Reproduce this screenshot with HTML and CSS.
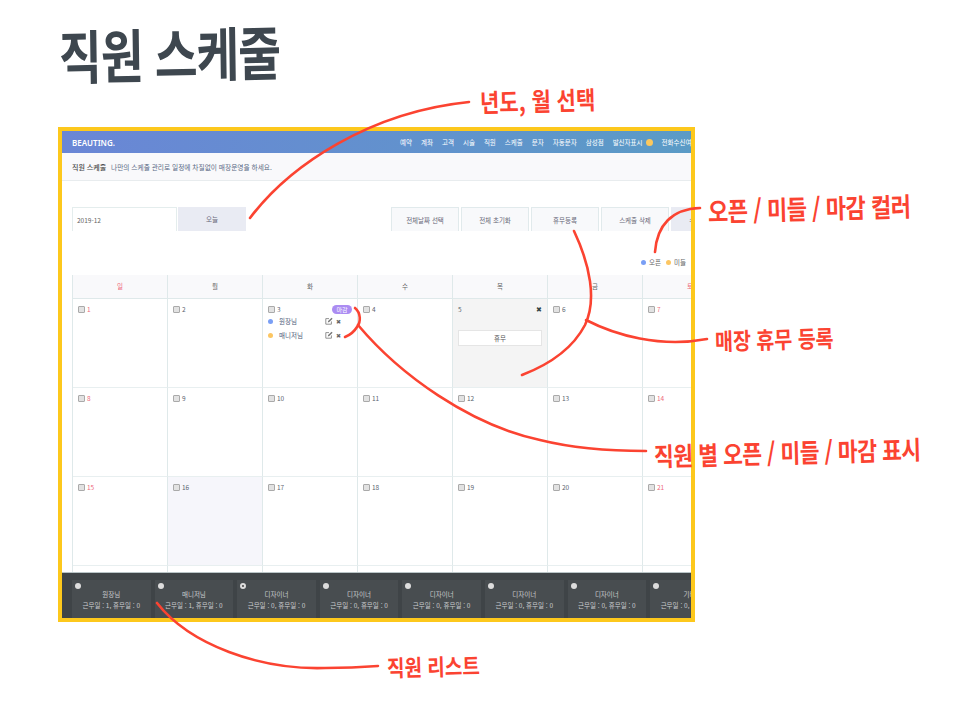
FILE: index.html
```html
<!DOCTYPE html>
<html lang="ko">
<head>
    <meta charset="UTF-8">
    <meta name="viewport" content="width=device-width, initial-scale=1.0">
    <title>직원 스케줄</title>
    <link rel="stylesheet" href="styles.css">
</head>
<body>
    <div class="page">
        <h1 class="page-title"><span>직원 스케줄</span></h1>

        <div class="frame">
            <header class="topbar">
                <div class="logo">BEAUTING.</div>
                <nav class="nav">
                    <span>예약</span><span>계좌</span><span>고객</span><span>시술</span><span>직원</span>
                    <span>스케줄</span><span>문자</span><span>자동문자</span><span>삼성점</span>
                    <span class="nav-caller">발신자표시 <i class="nav-dot"></i></span>
                    <span>전화수신여부</span>
                </nav>
            </header>
            <div class="subbar"><b>직원 스케줄</b> 나만의 스케줄 관리로 일정에 차질없이 매장운영을 하세요.</div>

            <main class="content">
                <div class="toolbar">
                    <div class="date-box">2019-12</div>
                    <div class="tool-btn today">오늘</div>
                    <div class="tool-group">
                        <div class="tool-btn">전체날짜 선택</div>
                        <div class="tool-btn">전체 초기화</div>
                        <div class="tool-btn">휴무등록</div>
                        <div class="tool-btn">스케줄 삭제</div>
                        <div class="tool-btn save">스케줄 저장</div>
                    </div>
                </div>

                <div class="legend">
                    <span class="legend-item"><i class="dot blue"></i>오픈</span>
                    <span class="legend-item"><i class="dot yellow"></i>미들</span>
                    <span class="legend-item"><i class="dot purple"></i>마감</span>
                </div>

                <div class="calendar">
                    <div class="head red">일</div>
                    <div class="head">월</div>
                    <div class="head">화</div>
                    <div class="head">수</div>
                    <div class="head">목</div>
                    <div class="head">금</div>
                    <div class="head red">토</div>

                    <div class="day"><div class="num red"><i class="check"></i>1</div></div>
                    <div class="day"><div class="num"><i class="check"></i>2</div></div>
                    <div class="day">
                        <div class="num"><i class="check"></i>3<span class="badge">마감</span></div>
                        <div class="staff">
                            <i class="dot blue"></i><span class="staff-name">원장님</span>
                            <svg class="edit" viewBox="0 0 10 10"><path d="M8 5.5V9H1V2h4" fill="none" stroke="#777" stroke-width="1"/><path d="M3.5 6.8l.4-1.8L8.2.8l1.3 1.3-4.2 4.3z" fill="#777"/></svg>
                            <span class="remove">✖</span>
                        </div>
                        <div class="staff">
                            <i class="dot yellow"></i><span class="staff-name">매니저님</span>
                            <svg class="edit" viewBox="0 0 10 10"><path d="M8 5.5V9H1V2h4" fill="none" stroke="#777" stroke-width="1"/><path d="M3.5 6.8l.4-1.8L8.2.8l1.3 1.3-4.2 4.3z" fill="#777"/></svg>
                            <span class="remove">✖</span>
                        </div>
                    </div>
                    <div class="day"><div class="num"><i class="check"></i>4</div></div>
                    <div class="day closed">
                        <div class="num closed-num">5<span class="closed-x">✖</span></div>
                        <div class="closed-tag">휴무</div>
                    </div>
                    <div class="day"><div class="num"><i class="check"></i>6</div></div>
                    <div class="day"><div class="num red"><i class="check"></i>7</div></div>

                    <div class="day"><div class="num red"><i class="check"></i>8</div></div>
                    <div class="day"><div class="num"><i class="check"></i>9</div></div>
                    <div class="day"><div class="num"><i class="check"></i>10</div></div>
                    <div class="day"><div class="num"><i class="check"></i>11</div></div>
                    <div class="day"><div class="num"><i class="check"></i>12</div></div>
                    <div class="day"><div class="num"><i class="check"></i>13</div></div>
                    <div class="day"><div class="num red"><i class="check"></i>14</div></div>

                    <div class="day"><div class="num red"><i class="check"></i>15</div></div>
                    <div class="day today-cell"><div class="num"><i class="check"></i>16</div></div>
                    <div class="day"><div class="num"><i class="check"></i>17</div></div>
                    <div class="day"><div class="num"><i class="check"></i>18</div></div>
                    <div class="day"><div class="num"><i class="check"></i>19</div></div>
                    <div class="day"><div class="num"><i class="check"></i>20</div></div>
                    <div class="day"><div class="num red"><i class="check"></i>21</div></div>

                    <div class="day"></div><div class="day"></div><div class="day"></div><div class="day"></div>
                    <div class="day"></div><div class="day"></div><div class="day"></div>
                </div>
            </main>

            <footer class="staff-bar">
                <div class="card"><i class="radio"></i><div>원장님</div><div>근무일 : 1, 휴무일 : 0</div></div>
                <div class="card"><i class="radio"></i><div>매니저님</div><div>근무일 : 1, 휴무일 : 0</div></div>
                <div class="card"><i class="radio on"></i><div>디자이너</div><div>근무일 : 0, 휴무일 : 0</div></div>
                <div class="card"><i class="radio"></i><div>디자이너</div><div>근무일 : 0, 휴무일 : 0</div></div>
                <div class="card"><i class="radio"></i><div>디자이너</div><div>근무일 : 0, 휴무일 : 0</div></div>
                <div class="card"><i class="radio"></i><div>디자이너</div><div>근무일 : 0, 휴무일 : 0</div></div>
                <div class="card"><i class="radio"></i><div>디자이너</div><div>근무일 : 0, 휴무일 : 0</div></div>
                <div class="card"><i class="radio"></i><div>기타</div><div>근무일 : 0, 휴무일 : 0</div></div>
            </footer>
        </div>

        <!-- red notes drawn over the screenshot -->
        <svg class="arrows" viewBox="0 0 960 714">
            <path d="M250 218C290 165 370 112 469 102"/>
            <path d="M655 252C657 225 672 209 700 208"/>
            <path d="M574 231C590 265 597 300 585 325C572 350 548 365 522 375"/>
            <path d="M586 320C615 335 660 348 707 339"/>
            <path d="M355 308C361 313 361 322 357 327C354 332 350 335 345 337"/>
            <path d="M358 325C400 375 470 425 540 440C580 450 620 451 646 451"/>
            <path d="M157 603C190 645 260 670 325 668C345 668 365 667 378 666"/>
        </svg>
        <div class="note note-date">년도, 월 선택</div>
        <div class="note note-color">오픈 / 미들 / 마감 컬러</div>
        <div class="note note-closed">매장 휴무 등록</div>
        <div class="note note-shift">직원 별 오픈 / 미들 / 마감 표시</div>
        <div class="note note-list">직원 리스트</div>
    </div>
</body>
</html>
```

FILE: styles.css
```css
* {
    box-sizing: border-box;
}

body {
    margin: 0;
    background-color: #fff;
    font-family: "Noto Sans CJK KR", "Noto Sans", sans-serif;
    color: #666;
}

.page {
    position: relative;
    width: 960px;
    height: 714px;
    overflow: hidden;
}

.page-title {
    height: 127px;
    margin: 0;
    padding: 14px 0 0 59px;
    font-size: 46.5px;
    line-height: 76px;
    font-weight: 700;
    color: #3e474f;
    letter-spacing: -1px;
}

.page-title span {
    display: inline-block;
    transform: scaleY(1.25) rotate(-1deg);
}

.frame {
    display: flex;
    flex-direction: column;
    width: 637px;
    height: 495px;
    margin-left: 58px;
    border: 4px solid #fdc81c;
    overflow: hidden;
    font-size: 6.5px;
}

.topbar {
    flex: none;
    display: flex;
    align-items: center;
    height: 22px;
    padding-left: 10px;
    background: linear-gradient(90deg, #6a86d6, #5b9bc6);
    color: #fff;
    white-space: nowrap;
}

.logo {
    flex: none;
    width: 328px;
    font-family: "Noto Sans", sans-serif;
    font-size: 8px;
    font-weight: 600;
}

.nav {
    flex: none;
    display: flex;
    gap: 9px;
    font-size: 6.5px;
}

.nav-caller {
    display: flex;
    align-items: center;
    gap: 3px;
}

.nav-dot {
    width: 7px;
    height: 7px;
    border-radius: 50%;
    background-color: #fbc85e;
}

.subbar {
    flex: none;
    height: 28px;
    padding-left: 10px;
    line-height: 28px;
    background-color: #f9f9fb;
    border-bottom: 1px solid #e8ecee;
    color: #5a6a85;
    font-size: 6.7px;
    white-space: nowrap;
}

.subbar b {
    margin-right: 3px;
    color: #444;
    font-size: 7px;
    font-weight: 500;
}

.content {
    flex: 1;
    min-height: 0;
    padding: 26px 0 0 10px;
    overflow: hidden;
}

.toolbar {
    display: flex;
    width: 700px;
    height: 24px;
}

.date-box {
    width: 105px;
    padding-left: 4px;
    line-height: 24px;
    border: 1px solid #e4eded;
    border-bottom: 0;
    color: #666;
    font-size: 6.5px;
}

.tool-btn {
    width: 68px;
    height: 24px;
    line-height: 24px;
    text-align: center;
    background-color: #f8f9fb;
    border: 1px solid #e1eaec;
    border-bottom: 0;
    color: #667;
}

.today {
    margin-left: 1px;
    background-color: #e9ebf3;
    border: 0;
}

.tool-group {
    display: flex;
    gap: 2px;
    margin-left: 145px;
}

.save {
    background-color: #e9ebf3;
    border: 0;
}

.legend {
    display: flex;
    gap: 5px;
    width: 700px;
    height: 44px;
    padding: 25px 0 0 569px;
    white-space: nowrap;
}

.legend-item {
    display: flex;
    align-items: center;
    gap: 3px;
    height: 12px;
}

.dot {
    display: block;
    flex: none;
    width: 5px;
    height: 5px;
    border-radius: 50%;
}

.blue {
    background-color: #7a9ff5;
}

.yellow {
    background-color: #fcc662;
}

.purple {
    background-color: #b59af0;
}

.calendar {
    display: grid;
    grid-template-columns: repeat(7, 95px);
    grid-template-rows: 24px;
    grid-auto-rows: 89px;
    width: 665px;
    border-left: 1px solid #dfe9ea;
}

.head {
    line-height: 23px;
    text-align: center;
    background-color: #f9f9fb;
    border-right: 1px solid #dfe9ea;
    border-bottom: 1px solid #dfe9ea;
    color: #666;
}

.red {
    color: #ee6a7c;
}

.day {
    padding: 5px 5px 0;
    border-right: 1px solid #dfe9ea;
    border-bottom: 1px solid #e8eff0;
}

.num {
    display: flex;
    align-items: center;
    gap: 2px;
    height: 10px;
    font-size: 6.5px;
}

.num:not(.red) {
    color: #5b6570;
}

.check {
    flex: none;
    width: 7px;
    height: 7px;
    background-color: #e2e2e2;
    border: 1px solid #aaa;
    border-radius: 1px;
}

.badge {
    width: 20px;
    height: 9px;
    margin-left: auto;
    line-height: 9px;
    text-align: center;
    background-color: #ab8cf2;
    border-radius: 5px;
    color: #fff;
    font-size: 6px;
}

.staff {
    display: flex;
    align-items: center;
    height: 14px;
    color: #4b5a78;
}

.staff-name {
    margin-left: 6px;
}

.edit {
    width: 8px;
    height: 8px;
    margin-left: auto;
}

.remove {
    width: 7px;
    margin: 0 9px 0 3px;
    font-size: 6px;
    color: #666;
}

.closed {
    background-color: #f4f4f4;
}

.closed-num {
    justify-content: space-between;
}

.closed-x {
    color: #344;
    font-size: 7px;
}

.closed-tag {
    height: 16px;
    margin-top: 16px;
    line-height: 15px;
    text-align: center;
    background-color: #fff;
    border: 1px solid #e5e5e5;
    color: #555;
}

.today-cell {
    background-color: #f6f6fb;
}

.staff-bar {
    flex: none;
    display: flex;
    gap: 4px;
    height: 46px;
    padding: 7px 0 0 10px;
    background-color: #3f4447;
    border-top: 1px solid #b9c4c6;
    overflow: hidden;
}

.card {
    position: relative;
    flex: none;
    width: 78.6px;
    padding-top: 9px;
    background-color: #484d50;
    color: #c8cbcd;
    font-size: 6.5px;
    line-height: 11px;
    text-align: center;
    white-space: nowrap;
}

.radio {
    position: absolute;
    top: 3px;
    left: 3px;
    width: 6px;
    height: 6px;
    background-color: #ddd;
    border-radius: 50%;
}

.radio.on {
    background-color: #444;
    border: 2px solid #ddd;
}

.arrows {
    position: absolute;
    top: 0;
    left: 0;
    width: 960px;
    height: 714px;
    fill: none;
    stroke: #fb4331;
    stroke-width: 2.6;
    stroke-linecap: round;
}

.note {
    position: absolute;
    color: #fb4331;
    font-weight: 700;
    white-space: nowrap;
    transform: rotate(-1.5deg) scaleY(1.2);
}

.note-date {
    left: 480px;
    top: 83px;
    font-size: 21px;
    line-height: 34px;
}

.note-color {
    left: 708px;
    top: 191px;
    font-size: 22px;
    line-height: 32px;
    letter-spacing: -0.5px;
}

.note-closed {
    left: 715px;
    top: 322px;
    font-size: 19.5px;
    line-height: 34px;
}

.note-shift {
    left: 654px;
    top: 436px;
    font-size: 21.5px;
    line-height: 32px;
    letter-spacing: -0.5px;
}

.note-list {
    left: 387px;
    top: 650px;
    font-size: 19px;
    line-height: 32px;
}
```
